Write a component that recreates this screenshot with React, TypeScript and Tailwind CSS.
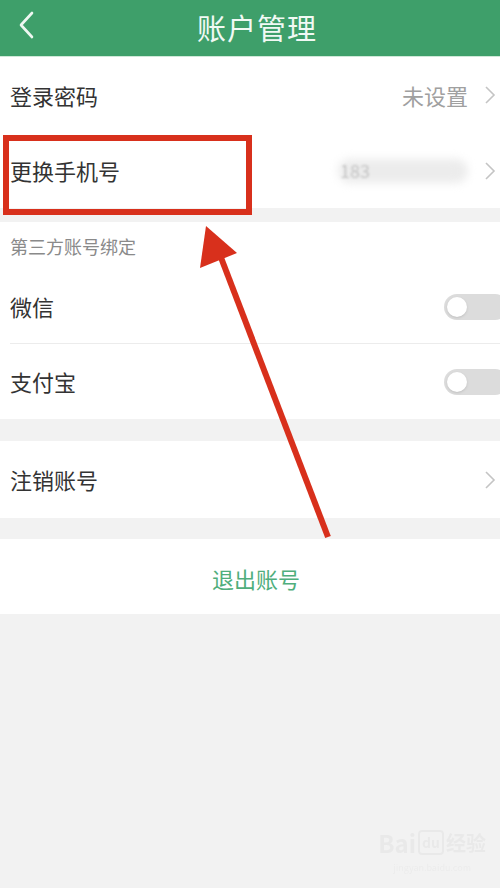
const font = { fontFamily: '"Noto Sans CJK SC", "Noto Sans", sans-serif' };

function Chevron() {
  return (
    <svg width="12" height="20" viewBox="0 0 12 20" className="shrink-0">
      <path d="M2 2 L10 10 L2 18" fill="none" stroke="#c4c4c4" strokeWidth="1.6" />
    </svg>
  );
}

function Toggle() {
  return (
    <div className="relative h-[26px] w-[64px] rounded-full bg-[#dcdcdc] -mr-[8px]">
      <div className="absolute left-[3px] top-[3px] h-[20px] w-[20px] rounded-full bg-white shadow-sm" />
    </div>
  );
}

export default function App() {
  return (
    <div className="relative h-[888px] w-[500px] overflow-hidden bg-[#f2f2f2]" style={font}>
      {/* Header */}
      <div className="relative flex h-[57px] items-center justify-center bg-[#3e9f6a] border-b border-[#cfe8d8] pl-[14px]">
        <svg width="18" height="30" viewBox="0 0 18 30" className="absolute left-[17px] top-[10px]">
          <path d="M15 3 L4 15 L15 27" fill="none" stroke="#eef7f1" strokeWidth="2.6" strokeLinecap="round" strokeLinejoin="round" />
        </svg>
        <span className="text-[29px] text-[#f1f9f4] tracking-[1px]">账户管理</span>
      </div>

      {/* Account rows */}
      <div className="bg-white">
        <div className="flex h-[76px] items-center pl-[10px] pr-[4px]">
          <span className="flex-1 text-[22px] text-[#333]">登录密码</span>
          <span className="mr-[16px] text-[22px] text-[#a0a0a0]">未设置</span>
          <Chevron />
        </div>
        <div className="flex h-[75px] items-center pl-[10px] pr-[4px]">
          <span className="flex-1 text-[22px] text-[#333]">更换手机号</span>
          <div className="relative mr-[16px] flex h-[24px] w-[130px] items-center">
            <div className="absolute inset-0 rounded-full bg-[#ececec] blur-[4px]" />
            <span className="relative pl-[2px] text-[18px] text-[#c4c4c4] blur-[1px]">183</span>
          </div>
          <Chevron />
        </div>
      </div>

      <div className="h-[14px]" />

      {/* Third party */}
      <div className="bg-white">
        <div className="flex h-[48px] items-center pl-[10px]">
          <span className="text-[18px] text-[#8a8a8a]">第三方账号绑定</span>
        </div>
        <div className="flex h-[73px] items-center pl-[10px]">
          <span className="flex-1 text-[22px] text-[#333]">微信</span>
          <Toggle />
        </div>
        <div className="ml-[10px] h-px bg-[#ececec]" />
        <div className="flex h-[75px] items-center pl-[10px]">
          <span className="flex-1 text-[22px] text-[#333]">支付宝</span>
          <Toggle />
        </div>
      </div>

      <div className="h-[22px]" />

      <div className="flex h-[77px] items-center bg-white pl-[10px] pr-[4px]">
        <span className="flex-1 text-[22px] text-[#333]">注销账号</span>
        <Chevron />
      </div>

      <div className="h-[21px]" />

      <div className="flex h-[75px] items-center justify-center bg-white pt-[4px] pl-[12px]">
        <span className="text-[22px] text-[#4fae7c]">退出账号</span>
      </div>

      {/* Annotation: red box */}
      <div className="absolute left-[3px] top-[135px] h-[80px] w-[249px] border-[6px] border-[#d8301c]" />

      {/* Annotation: arrow */}
      <svg className="absolute left-0 top-0" width="500" height="888" viewBox="0 0 500 888">
        <line x1="328" y1="537" x2="220" y2="255" stroke="#d8301c" strokeWidth="6" />
        <polygon points="206,226 200,268 237,253" fill="#d8301c" />
      </svg>

      {/* Watermark */}
      <div className="absolute right-[14px] bottom-[14px] flex flex-col items-center opacity-60">
        <div className="flex items-center text-[24px] font-bold text-[#e4e4e4]">
          <span>Bai</span>
          <span className="mx-[2px] rounded-[4px] border-2 border-[#e4e4e4] px-[2px] text-[14px]">du</span>
          <span className="text-[20px]">经验</span>
        </div>
        <span className="text-[9px] text-[#e8e8e8]">jingyan.baidu.com</span>
      </div>
    </div>
  );
}
